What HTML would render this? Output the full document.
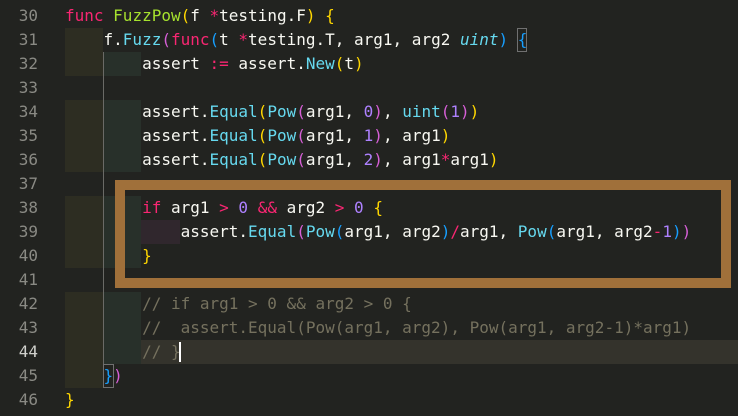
<!DOCTYPE html>
<html><head><meta charset="utf-8"><style>
html,body{margin:0;padding:0;background:#222320;width:738px;height:416px;overflow:hidden}
.l{position:absolute;left:0;height:24px;width:738px;font:16px/24px "DejaVu Sans Mono","Liberation Mono",monospace;color:#f8f8f2;white-space:pre}
.n{position:absolute;left:0;width:38px;text-align:right;color:#8a8a84}
.c{position:absolute;left:65px}
.k{color:#f92672}.g{color:#a6e22e}.b{color:#66d9ef}.p{color:#ae81ff}.pk{color:#d65fd6}.br{color:#ffd700}.bl{color:#179fff}.cm{color:#75715e}.it{font-style:italic;color:#66d9ef}
.i1{position:absolute;left:65px;width:38px;height:24px;background:#2d2d22}
.i2{position:absolute;left:103px;width:38px;height:24px;background:#28302a}
.i3{position:absolute;left:141px;width:39px;height:24px;background:#30272d}
</style></head><body>
<div style="position:absolute;left:65px;top:340px;width:673px;height:24px;background:#34332c"></div>
<div class="i1" style="top:28px"></div>
<div class="i1" style="top:52px"></div><div class="i2" style="top:52px"></div>
<div class="i1" style="top:100px;height:72px"></div><div class="i2" style="top:100px;height:72px"></div>
<div class="i1" style="top:196px;height:72px"></div><div class="i2" style="top:196px;height:72px"></div>
<div class="i3" style="top:220px"></div>
<div class="i1" style="top:292px;height:96px"></div><div class="i2" style="top:292px;height:72px"></div>
<div style="position:absolute;left:103px;top:52px;width:1px;height:336px;background:#6a6a66"></div>
<div style="position:absolute;left:115px;top:180px;width:596px;height:88px;border:10px solid #a0703a"></div>
<div style="position:absolute;left:103px;top:364px;width:9px;height:22px;border:1px solid #707070"></div>
<div style="position:absolute;left:517px;top:28px;width:8px;height:22px;border:1px solid #707070"></div>
<div style="position:absolute;left:179px;top:342px;width:2px;height:20px;background:#fff"></div>

<div class="l" style="top:4px"><span class="n">30</span><span class="c"><span class="k">func</span> <span class="g">FuzzPow</span><span class="br">(</span>f <span class="k">*</span>testing.F<span class="br">)</span> <span class="br">{</span></span></div>
<div class="l" style="top:28px"><span class="n">31</span><span class="c">    f.<span class="b">Fuzz</span><span class="pk">(</span><span class="k">func</span><span class="bl">(</span>t <span class="k">*</span>testing.T, arg1, arg2 <span class="it">uint</span><span class="bl">)</span> <span class="bl">{</span></span></div>
<div class="l" style="top:52px"><span class="n">32</span><span class="c">        assert <span class="k">:=</span> assert.<span class="b">New</span><span class="br">(</span>t<span class="br">)</span></span></div>
<div class="l" style="top:76px"><span class="n">33</span></div>
<div class="l" style="top:100px"><span class="n">34</span><span class="c">        assert.<span class="b">Equal</span><span class="br">(</span><span class="b">Pow</span><span class="pk">(</span>arg1, <span class="p">0</span><span class="pk">)</span>, <span class="b">uint</span><span class="pk">(</span><span class="p">1</span><span class="pk">)</span><span class="br">)</span></span></div>
<div class="l" style="top:124px"><span class="n">35</span><span class="c">        assert.<span class="b">Equal</span><span class="br">(</span><span class="b">Pow</span><span class="pk">(</span>arg1, <span class="p">1</span><span class="pk">)</span>, arg1<span class="br">)</span></span></div>
<div class="l" style="top:148px"><span class="n">36</span><span class="c">        assert.<span class="b">Equal</span><span class="br">(</span><span class="b">Pow</span><span class="pk">(</span>arg1, <span class="p">2</span><span class="pk">)</span>, arg1<span class="k">*</span>arg1<span class="br">)</span></span></div>
<div class="l" style="top:172px"><span class="n">37</span></div>
<div class="l" style="top:196px"><span class="n">38</span><span class="c">        <span class="k">if</span> arg1 <span class="k">&gt;</span> <span class="p">0</span> <span class="k">&amp;&amp;</span> arg2 <span class="k">&gt;</span> <span class="p">0</span> <span class="br">{</span></span></div>
<div class="l" style="top:220px"><span class="n">39</span><span class="c">            assert.<span class="b">Equal</span><span class="pk">(</span><span class="b">Pow</span><span class="bl">(</span>arg1, arg2<span class="bl">)</span><span class="k">/</span>arg1, <span class="b">Pow</span><span class="bl">(</span>arg1, arg2<span class="k">-</span><span class="p">1</span><span class="bl">)</span><span class="pk">)</span></span></div>
<div class="l" style="top:244px"><span class="n">40</span><span class="c">        <span class="br">}</span></span></div>
<div class="l" style="top:268px"><span class="n">41</span></div>
<div class="l" style="top:292px"><span class="n">42</span><span class="c cm">        // if arg1 &gt; 0 &amp;&amp; arg2 &gt; 0 {</span></div>
<div class="l" style="top:316px"><span class="n">43</span><span class="c cm">        //  assert.Equal(Pow(arg1, arg2), Pow(arg1, arg2-1)*arg1)</span></div>
<div class="l" style="top:340px"><span class="n" style="color:#d0d0cc">44</span><span class="c cm">        // }</span></div>
<div class="l" style="top:364px"><span class="n">45</span><span class="c">    <span class="bl">}</span><span class="pk">)</span></span></div>
<div class="l" style="top:388px"><span class="n">46</span><span class="c"><span class="br">}</span></span></div>
</body></html>
